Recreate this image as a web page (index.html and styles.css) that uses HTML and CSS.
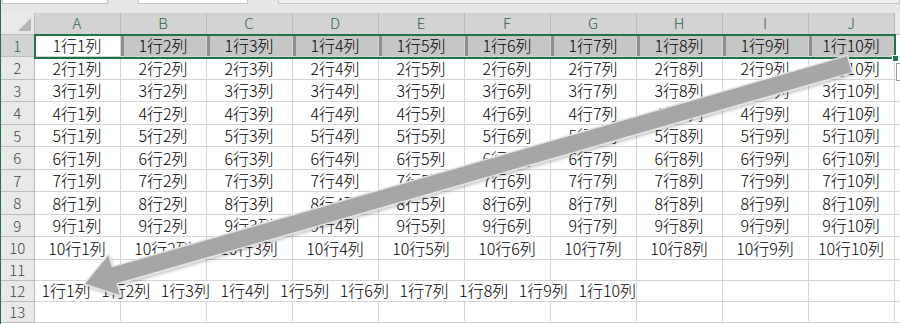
FILE: index.html
```html
<!DOCTYPE html>
<html lang="ja">
<head>
    <meta charset="UTF-8">
    <title>Sheet1</title>
    <link rel="stylesheet" href="styles.css">
</head>
<body>
    <div class="window">
        <div class="toolbar">
            <div class="box box-name"></div>
            <div class="box box-mid"></div>
            <div class="box box-formula"></div>
        </div>

        <div class="sheet">
            <table class="grid">
                <colgroup>
                    <col class="col-head">
                    <col class="col"><col class="col"><col class="col"><col class="col"><col class="col">
                    <col class="col"><col class="col"><col class="col"><col class="col"><col class="col">
                    <col class="col-rest">
                </colgroup>
                <tr class="head-row">
                    <th class="corner"><span class="corner-mark"></span></th>
                    <th class="sel">A</th><th class="sel">B</th><th class="sel">C</th><th class="sel">D</th><th class="sel">E</th>
                    <th class="sel">F</th><th class="sel">G</th><th class="sel">H</th><th class="sel">I</th><th class="sel">J</th>
                    <th></th>
                </tr>
                <tr class="row-a">
                    <th class="sel">1</th>
                    <td class="active">1行1列</td><td class="picked">1行2列</td><td class="picked">1行3列</td><td class="picked">1行4列</td><td class="picked">1行5列</td>
                    <td class="picked">1行6列</td><td class="picked">1行7列</td><td class="picked">1行8列</td><td class="picked">1行9列</td><td class="picked">1行10列</td>
                    <td></td>
                </tr>
                <tr class="row-b">
                    <th>2</th>
                    <td>2行1列</td><td>2行2列</td><td>2行3列</td><td>2行4列</td><td>2行5列</td>
                    <td>2行6列</td><td>2行7列</td><td>2行8列</td><td>2行9列</td><td>2行10列</td>
                    <td></td>
                </tr>
                <tr class="row-a">
                    <th>3</th>
                    <td>3行1列</td><td>3行2列</td><td>3行3列</td><td>3行4列</td><td>3行5列</td>
                    <td>3行6列</td><td>3行7列</td><td>3行8列</td><td>3行9列</td><td>3行10列</td>
                    <td></td>
                </tr>
                <tr class="row-b">
                    <th>4</th>
                    <td>4行1列</td><td>4行2列</td><td>4行3列</td><td>4行4列</td><td>4行5列</td>
                    <td>4行6列</td><td>4行7列</td><td>4行8列</td><td>4行9列</td><td>4行10列</td>
                    <td></td>
                </tr>
                <tr class="row-a">
                    <th>5</th>
                    <td>5行1列</td><td>5行2列</td><td>5行3列</td><td>5行4列</td><td>5行5列</td>
                    <td>5行6列</td><td>5行7列</td><td>5行8列</td><td>5行9列</td><td>5行10列</td>
                    <td></td>
                </tr>
                <tr class="row-b">
                    <th>6</th>
                    <td>6行1列</td><td>6行2列</td><td>6行3列</td><td>6行4列</td><td>6行5列</td>
                    <td>6行6列</td><td>6行7列</td><td>6行8列</td><td>6行9列</td><td>6行10列</td>
                    <td></td>
                </tr>
                <tr class="row-a">
                    <th>7</th>
                    <td>7行1列</td><td>7行2列</td><td>7行3列</td><td>7行4列</td><td>7行5列</td>
                    <td>7行6列</td><td>7行7列</td><td>7行8列</td><td>7行9列</td><td>7行10列</td>
                    <td></td>
                </tr>
                <tr class="row-b">
                    <th>8</th>
                    <td>8行1列</td><td>8行2列</td><td>8行3列</td><td>8行4列</td><td>8行5列</td>
                    <td>8行6列</td><td>8行7列</td><td>8行8列</td><td>8行9列</td><td>8行10列</td>
                    <td></td>
                </tr>
                <tr class="row-a">
                    <th>9</th>
                    <td>9行1列</td><td>9行2列</td><td>9行3列</td><td>9行4列</td><td>9行5列</td>
                    <td>9行6列</td><td>9行7列</td><td>9行8列</td><td>9行9列</td><td>9行10列</td>
                    <td></td>
                </tr>
                <tr class="row-b">
                    <th>10</th>
                    <td>10行1列</td><td>10行2列</td><td>10行3列</td><td>10行4列</td><td>10行5列</td>
                    <td>10行6列</td><td>10行7列</td><td>10行8列</td><td>10行9列</td><td>10行10列</td>
                    <td></td>
                </tr>
                <tr class="row-c">
                    <th>11</th>
                    <td></td><td></td><td></td><td></td><td></td>
                    <td></td><td></td><td></td><td></td><td></td>
                    <td></td>
                </tr>
                <tr class="row-c">
                    <th>12</th>
                    <td class="joined" colspan="7">1行1列 1行2列 1行3列 1行4列 1行5列 1行6列 1行7列 1行8列 1行9列 1行10列</td>
                    <td></td><td></td><td></td>
                    <td></td>
                </tr>
                <tr class="row-c">
                    <th>13</th>
                    <td></td><td></td><td></td><td></td><td></td>
                    <td></td><td></td><td></td><td></td><td></td>
                    <td></td>
                </tr>
            </table>

            <!-- selection outline over A1:J1 -->
            <div class="selection"><span class="fill-handle"></span></div>
            <div class="quick-btn"></div>
        </div>

        <!-- drawn arrow shape -->
        <svg class="arrow" width="900" height="324" viewBox="0 0 900 324">
            <defs>
                <filter id="soft" x="-5%" y="-20%" width="110%" height="140%">
                    <feDropShadow dx="1" dy="2" stdDeviation="1.5" flood-color="#000" flood-opacity="0.22"/>
                </filter>
            </defs>
            <polygon points="847.5,55.4 112.3,266.6 108.7,254.1 84,284 120.9,296.3 117.3,283.8 852.5,72.6"
                     fill="#a6a6a6" stroke="#e4e4e4" stroke-width="1.5" stroke-linejoin="round" filter="url(#soft)"/>
        </svg>
    </div>
</body>
</html>
```

FILE: styles.css
```css
* {
    margin: 0;
    padding: 0;
    box-sizing: border-box;
}

:root {
    --green: #217346;
    --line: #d4d4d4;
    --head: #e9e9e9;
    --head-sel: #d3d3d3;
    --head-line: #bcbcbc;
    --picked: #c6c6c6;
}

body {
    width: 900px;
    height: 324px;
    overflow: hidden;
    background: #fff;
    font-family: "Noto Sans CJK JP", "Noto Sans", sans-serif;
    font-weight: 300;
    color: #000;
}

.window {
    position: relative;
    height: 324px;
    border-left: 1px solid var(--green);
}

.toolbar {
    height: 13px;
    background: #e6e6e6;
    display: flex;
    gap: 30px;
    align-items: flex-start;
}

.box {
    height: 4px;
    background: #fff;
    border: 1px solid #c6c6c6;
    border-top: none;
}

.box-name {
    width: 106px;
    margin-left: 1px;
}

.box-mid {
    width: 110px;
}

.box-formula {
    flex: 1;
    background: #f0f0f0;
}

.sheet {
    position: relative;
}

.grid {
    table-layout: fixed;
    border-collapse: collapse;
    width: 899px;
}

.col-head {
    width: 33px;
}

.col {
    width: 86px;
}

.col-rest {
    width: 6px;
}

.grid th,
.grid td {
    border: 1px solid var(--line);
    padding: 0;
    white-space: nowrap;
    overflow: hidden;
}

.grid td {
    font-size: 16px;
    text-align: center;
}

.grid th {
    font-weight: 300;
    background: var(--head);
    color: #444;
    font-size: 15px;
    border-color: var(--head-line);
    text-align: center;
}

.head-row th {
    height: 21px;
    font-size: 15px;
    color: #3f6b53;
    line-height: 20px;
    border-top: none;
}

.grid th.sel {
    background: var(--head-sel);
    color: #2f6446;
}

.corner {
    position: relative;
}

.corner-mark {
    position: absolute;
    right: 3px;
    bottom: 3px;
    width: 0;
    height: 0;
    border-left: 13px solid transparent;
    border-bottom: 13px solid #b4b4b4;
}

.row-a th,
.row-a td {
    height: 22px;
    line-height: 21px;
}

.row-b th,
.row-b td {
    height: 23px;
    line-height: 22px;
}

.row-c th,
.row-c td {
    height: 21px;
    line-height: 19px;
}

.grid tr th:first-child {
    border-left: none;
}

.grid td.picked {
    background: var(--picked);
    box-shadow: inset 3px 0 0 #8e8e8e;
}

.grid td.joined {
    text-align: left;
    padding-left: 7px;
    word-spacing: 7px;
    overflow: visible;
}

.selection {
    position: absolute;
    left: 33px;
    top: 21px;
    width: 862px;
    height: 25px;
    border: 2px solid var(--green);
    pointer-events: none;
}

.fill-handle {
    position: absolute;
    right: -5px;
    bottom: -5px;
    width: 7px;
    height: 7px;
    background: var(--green);
    border: 1px solid #fff;
}

.quick-btn {
    position: absolute;
    left: 895px;
    top: 50px;
    width: 10px;
    height: 18px;
    border: 1px solid #9c9c9c;
    background: #fff;
}

.arrow {
    position: absolute;
    left: -1px;
    top: 0;
    pointer-events: none;
}
```
